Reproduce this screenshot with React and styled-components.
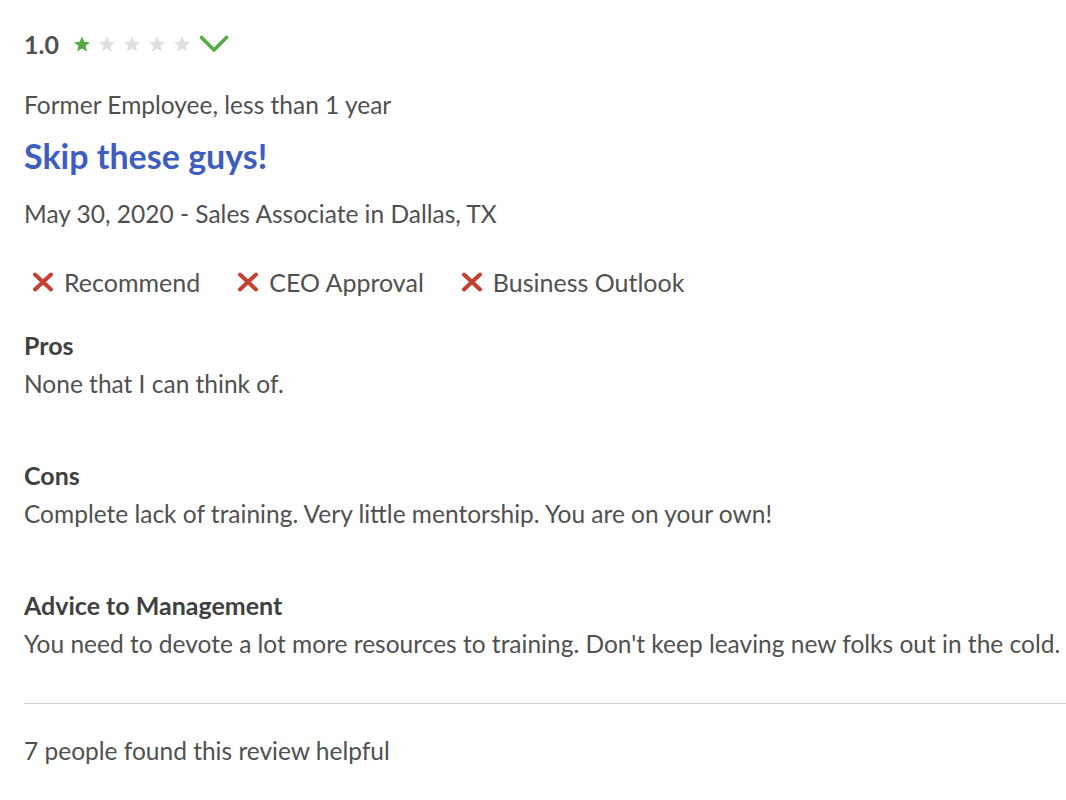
import React from 'react';
import styled, { createGlobalStyle } from 'styled-components';

const review = {
  rating: '1.0',
  stars: 1,
  status: 'Former Employee, less than 1 year',
  title: 'Skip these guys!',
  meta: 'May 30, 2020 - Sales Associate in Dallas, TX',
  checks: ['Recommend', 'CEO Approval', 'Business Outlook'],
  sections: [
    { label: 'Pros', text: 'None that I can think of.' },
    { label: 'Cons', text: 'Complete lack of training. Very little mentorship. You are on your own!' },
    {
      label: 'Advice to Management',
      text: "You need to devote a lot more resources to training. Don't keep leaving new folks out in the cold."
    }
  ],
  helpful: 7
};

const Star = ({ on }) => (
  <StarIcon viewBox="0 0 24 24" $on={on}>
    <path d="M12 1.8l3 7.1 7.6.6-5.8 5 1.8 7.5L12 18l-6.6 4 1.8-7.5-5.8-5 7.6-.6z" />
  </StarIcon>
);

const Chevron = () => (
  <ChevronIcon viewBox="0 0 30 18">
    <path d="M2.5 2.5 15 15 27.5 2.5" />
  </ChevronIcon>
);

const Cross = () => (
  <CrossIcon viewBox="0 0 22 20">
    <path d="M3 2.5 19 17.5M19 2.5 3 17.5" />
  </CrossIcon>
);

const App = () => (
  <>
    <GlobalStyle />
    <Review>
      <RatingRow>
        <Rating>{review.rating}</Rating>
        <Stars>
          {[1, 2, 3, 4, 5].map((n) => (
            <Star key={n} on={n <= review.stars} />
          ))}
        </Stars>
        <Chevron />
      </RatingRow>
      <Status>{review.status}</Status>
      <Title>{review.title}</Title>
      <Meta>{review.meta}</Meta>
      <Checks>
        {review.checks.map((c) => (
          <Check key={c}>
            <Cross />
            {c}
          </Check>
        ))}
      </Checks>
      {review.sections.map((s) => (
        <Section key={s.label}>
          <Label>{s.label}</Label>
          <Body>{s.text}</Body>
        </Section>
      ))}
      <Divider />
      <Helpful>{review.helpful} people found this review helpful</Helpful>
    </Review>
  </>
);

export default App;

const GlobalStyle = createGlobalStyle`
body {
  margin: 0;
  background: #fff;
  font-family: Lato, "Open Sans", sans-serif;
  color: #505050;
}
`;

const Review = styled.div`
padding: 24px 0 0 24px;
display: flex;
flex-direction: column;
`;

const RatingRow = styled.div`
display: flex;
align-items: center;
height: 40px;
`;

const Rating = styled.span`
font-size: 25px;
font-weight: 700;
color: #505050;
margin-right: 14px;
`;

const Stars = styled.div`
display: flex;
gap: 7px;
margin-right: 8px;
`;

const StarIcon = styled.svg`
width: 18px;
height: 18px;
fill: ${(p) => (p.$on ? '#55aa45' : '#dedfe2')};
`;

const ChevronIcon = styled.svg`
width: 30px;
height: 18px;
fill: none;
stroke: #55aa45;
stroke-width: 3.6;
stroke-linecap: round;
stroke-linejoin: round;
`;

const Status = styled.div`
font-size: 24.5px;
line-height: 30px;
margin-top: 26px;
`;

const Title = styled.h2`
margin: 16px 0 0;
font-size: 34px;
line-height: 40px;
font-weight: 700;
color: #3d5ec0;
`;

const Meta = styled.div`
font-size: 24.5px;
line-height: 30px;
margin-top: 23px;
`;

const Checks = styled.div`
display: flex;
gap: 37px;
margin: 38px 0 0 8px;
`;

const Check = styled.div`
display: flex;
align-items: center;
gap: 10px;
font-size: 25px;
line-height: 30px;
`;

const CrossIcon = styled.svg`
width: 22px;
height: 20px;
fill: none;
stroke: #c4402f;
stroke-width: 4;
stroke-linecap: round;
`;

const Section = styled.div`
display: flex;
flex-direction: column;
margin-top: 33px;

& + & {
  margin-top: 61px;
}
`;

const Label = styled.div`
font-size: 25px;
font-weight: 700;
line-height: 30px;
color: #404040;
`;

const Body = styled.div`
font-size: 24.5px;
line-height: 30px;
margin-top: 9px;
`;

const Divider = styled.hr`
border: 0;
border-top: 1px solid #ccc;
margin: 44px 0 0;
`;

const Helpful = styled.div`
font-size: 24.5px;
line-height: 30px;
margin-top: 32px;
`;
